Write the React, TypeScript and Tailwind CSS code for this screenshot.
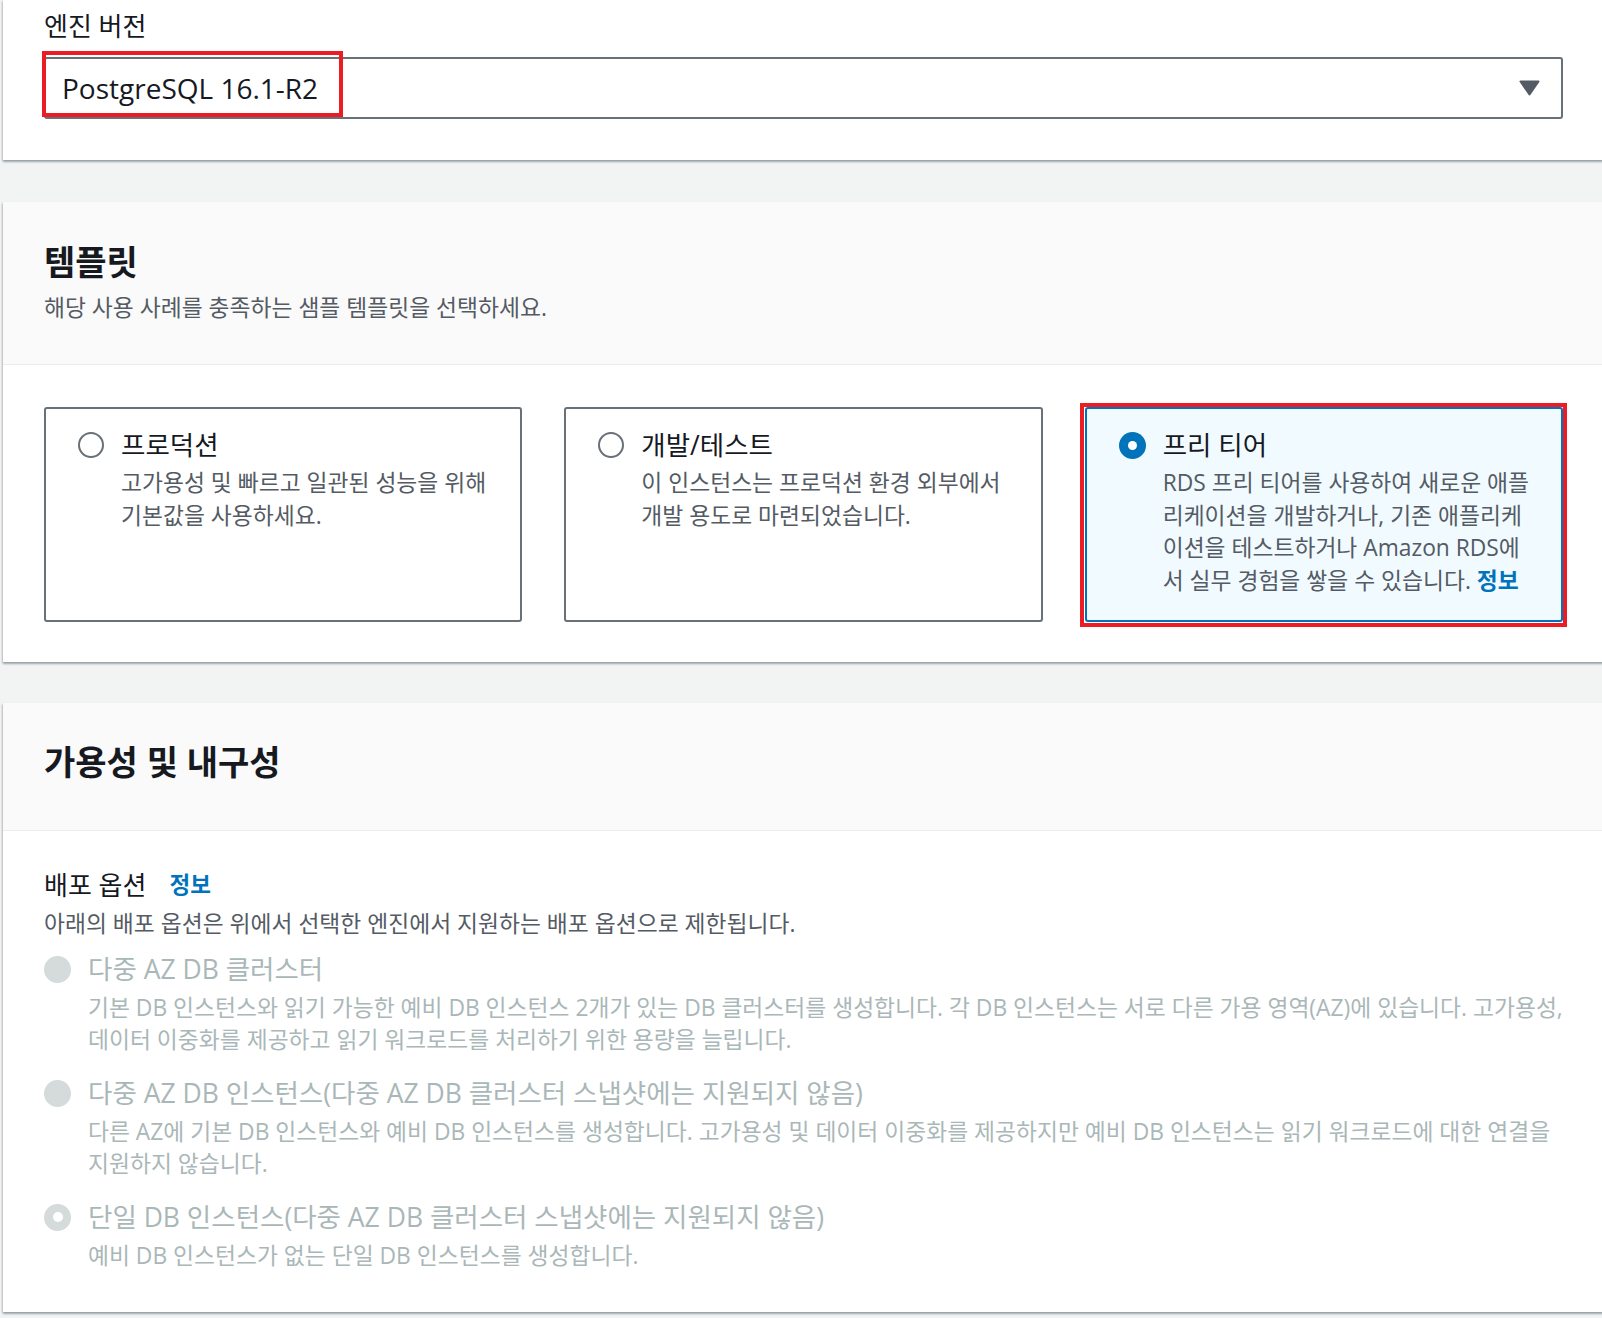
import React from "react";

type RadioState = "off" | "on" | "disabled" | "disabledOn";

const Radio = ({ state }: { state: RadioState }) => {
  if (state === "on") {
    return (
      <span className="flex h-[27px] w-[27px] shrink-0 items-center justify-center rounded-full bg-[#0073bb]">
        <span className="h-[9px] w-[9px] rounded-full bg-white" />
      </span>
    );
  }
  if (state === "disabledOn") {
    return (
      <span className="flex h-[27px] w-[27px] shrink-0 items-center justify-center rounded-full bg-[#d5dbdb]">
        <span className="h-[10px] w-[10px] rounded-full bg-white" />
      </span>
    );
  }
  if (state === "disabled") {
    return <span className="h-[27px] w-[27px] shrink-0 rounded-full bg-[#d5dbdb]" />;
  }
  return <span className="h-[26px] w-[26px] shrink-0 rounded-full border-2 border-[#687078] bg-white" />;
};

const tiles = [
  {
    title: "프로덕션",
    lines: ["고가용성 및 빠르고 일관된 성능을 위해", "기본값을 사용하세요."],
    selected: false,
  },
  {
    title: "개발/테스트",
    lines: ["이 인스턴스는 프로덕션 환경 외부에서", "개발 용도로 마련되었습니다."],
    selected: false,
  },
  {
    title: "프리 티어",
    lines: [
      "RDS 프리 티어를 사용하여 새로운 애플",
      "리케이션을 개발하거나, 기존 애플리케",
      "이션을 테스트하거나 Amazon RDS에",
      "서 실무 경험을 쌓을 수 있습니다.",
    ],
    selected: true,
  },
];

const deployOptions: { title: string; lines: string[]; state: RadioState }[] = [
  {
    title: "다중 AZ DB 클러스터",
    lines: [
      "기본 DB 인스턴스와 읽기 가능한 예비 DB 인스턴스 2개가 있는 DB 클러스터를 생성합니다. 각 DB 인스턴스는 서로 다른 가용 영역(AZ)에 있습니다. 고가용성,",
      "데이터 이중화를 제공하고 읽기 워크로드를 처리하기 위한 용량을 늘립니다.",
    ],
    state: "disabled",
  },
  {
    title: "다중 AZ DB 인스턴스(다중 AZ DB 클러스터 스냅샷에는 지원되지 않음)",
    lines: [
      "다른 AZ에 기본 DB 인스턴스와 예비 DB 인스턴스를 생성합니다. 고가용성 및 데이터 이중화를 제공하지만 예비 DB 인스턴스는 읽기 워크로드에 대한 연결을",
      "지원하지 않습니다.",
    ],
    state: "disabled",
  },
  {
    title: "단일 DB 인스턴스(다중 AZ DB 클러스터 스냅샷에는 지원되지 않음)",
    lines: ["예비 DB 인스턴스가 없는 단일 DB 인스턴스를 생성합니다."],
    state: "disabledOn",
  },
];

export default function App() {
  return (
    <div className="min-h-[1318px] w-full overflow-hidden bg-[#f2f3f3] font-['Open_Sans','Noto_Sans_CJK_KR',sans-serif] text-[#16191f]">
      {/* engine version */}
      <section className="ml-[3px] w-[1601px] bg-white px-[41px] pt-[10px] pb-[41px] shadow-[0_2px_2px_0_rgba(0,28,36,0.3),-1px_1px_2px_0_rgba(0,28,36,0.15)]">
        <p className="text-[26px] leading-[32px]">엔진 버전</p>
        <div className="relative mt-[15px]">
          <div className="flex h-[62px] items-center justify-between rounded-[3px] border-2 border-[#687078] pl-[16px] pr-[21px]">
            <span className="text-[28px]">PostgreSQL 16.1-R2</span>
            <svg width="21" height="16" viewBox="0 0 21 16">
              <path d="M1.5 1.5 H19.5 L10.5 14.5 Z" fill="#545b64" stroke="#545b64" strokeWidth="2" strokeLinejoin="round" />
            </svg>
          </div>
          <div className="absolute left-[-2px] top-[-6px] h-[66px] w-[301px] border-4 border-[#ec1c24]" />
        </div>
      </section>

      {/* templates */}
      <section className="mt-[42px] ml-[3px] w-[1601px] bg-white shadow-[0_2px_2px_0_rgba(0,28,36,0.3),-1px_1px_2px_0_rgba(0,28,36,0.15)]">
        <div className="border-b border-[#eaeded] bg-[#fafafa] px-[41px] pt-[40px] pb-[40px]">
          <h2 className="text-[34px] font-bold leading-[40px]">템플릿</h2>
          <p className="mt-[10px] text-[22.8px] leading-[32px] text-[#545b64]">
            해당 사용 사례를 충족하는 샘플 템플릿을 선택하세요.
          </p>
        </div>
        <div className="grid grid-cols-3 gap-[42px] px-[41px] pt-[42px] pb-[40px]">
          {tiles.map((t) => (
            <div key={t.title} className="relative">
              <div
                className={
                  t.selected
                    ? "flex h-[215px] gap-[17px] rounded-[3px] border-2 border-[#0073bb] bg-[#f1faff] pl-[32px] pt-[18px]"
                    : "flex h-[215px] gap-[17px] rounded-[3px] border-2 border-[#687078] bg-white pl-[32px] pt-[18px]"
                }
              >
                <div className="flex h-[36px] items-center">
                  <Radio state={t.selected ? "on" : "off"} />
                </div>
                <div>
                  <p className="text-[26.5px] leading-[36px]">{t.title}</p>
                  <div className="mt-[4px] text-[22.8px] leading-[32.5px] text-[#545b64]">
                    {t.lines.map((l, i) => (
                      <p key={i} className="whitespace-nowrap">
                        {l}
                        {t.selected && i === t.lines.length - 1 && (
                          <span className="font-bold text-[#0073bb]"> 정보</span>
                        )}
                      </p>
                    ))}
                  </div>
                </div>
              </div>
              {t.selected && (
                <div className="absolute left-[-5px] top-[-4px] right-[-4px] bottom-[-5px] border-4 border-[#ec1c24]" />
              )}
            </div>
          ))}
        </div>
      </section>

      {/* availability */}
      <section className="mt-[41px] ml-[3px] w-[1601px] bg-white shadow-[0_2px_2px_0_rgba(0,28,36,0.3),-1px_1px_2px_0_rgba(0,28,36,0.15)]">
        <div className="border-b border-[#eaeded] bg-[#fafafa] px-[41px] pt-[39px] pb-[48px]">
          <h2 className="text-[34px] font-bold leading-[40px]">가용성 및 내구성</h2>
        </div>
        <div className="px-[41px] pt-[38px] pb-[40px]">
          <div className="flex items-center gap-[23px]">
            <span className="text-[26px] leading-[32px]">배포 옵션</span>
            <span className="text-[22.5px] font-bold leading-[32px] text-[#0073bb]">정보</span>
          </div>
          <p className="mt-[7px] text-[22.8px] leading-[32px] text-[#545b64]">
            아래의 배포 옵션은 위에서 선택한 엔진에서 지원하는 배포 옵션으로 제한됩니다.
          </p>
          <div className="mt-[11px] flex flex-col gap-[19px]">
            {deployOptions.map((o) => (
              <div key={o.title} className="flex gap-[17px]">
                <div className="flex h-[36px] items-center">
                  <Radio state={o.state} />
                </div>
                <div className="text-[#aab7b8]">
                  <p className="text-[26.5px] leading-[36px]">{o.title}</p>
                  <div className="mt-[5px] text-[22.8px] leading-[32px]">
                    {o.lines.map((l, i) => (
                      <p key={i} className="whitespace-nowrap">
                        {l}
                      </p>
                    ))}
                  </div>
                </div>
              </div>
            ))}
          </div>
        </div>
      </section>
    </div>
  );
}
